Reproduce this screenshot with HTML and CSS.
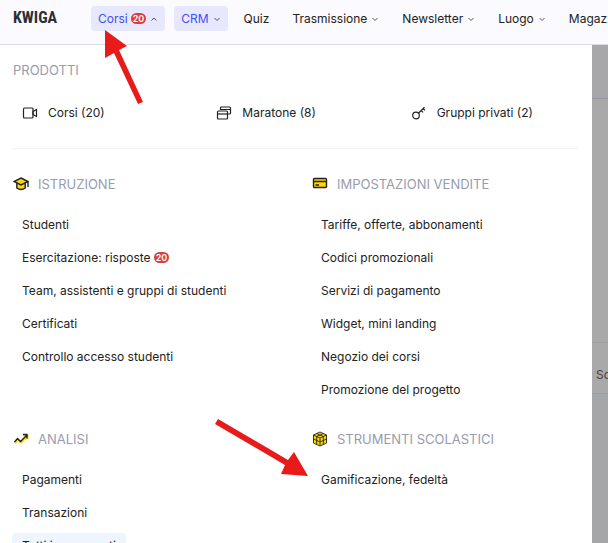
FILE: index.html
```html
<!DOCTYPE html>
<html lang="it">
<head>
  <meta charset="UTF-8" />
  <meta name="viewport" content="width=device-width, initial-scale=1.0" />
  <title>KWIGA - Corsi</title>
  <link rel="stylesheet" href="styles.css">
</head>
<body>
  <header class="topbar">
    <a class="logo" href="#">KWIGA</a>
    <nav class="nav">
      <button class="nav-item active" type="button" aria-expanded="true">Corsi <span class="badge">20</span>
        <svg class="chevron" viewBox="0 0 8 8"><path d="M1.5 5.5 4 3l2.5 2.5"/></svg></button>
      <button class="nav-item active" type="button">CRM
        <svg class="chevron" viewBox="0 0 8 8"><path d="M1.5 3 4 5.5 6.5 3"/></svg></button>
      <a class="nav-item" href="#">Quiz</a>
      <button class="nav-item" type="button">Trasmissione
        <svg class="chevron" viewBox="0 0 8 8"><path d="M1.5 3 4 5.5 6.5 3"/></svg></button>
      <button class="nav-item" type="button">Newsletter
        <svg class="chevron" viewBox="0 0 8 8"><path d="M1.5 3 4 5.5 6.5 3"/></svg></button>
      <button class="nav-item" type="button">Luogo
        <svg class="chevron" viewBox="0 0 8 8"><path d="M1.5 3 4 5.5 6.5 3"/></svg></button>
      <a class="nav-item" href="#">Magazzino</a>
    </nav>
  </header>

  <div class="page">
    <main class="menu">
      <section class="products">
        <h2>PRODOTTI</h2>
        <div class="product-list">
          <a href="#">
            <svg class="icon line" viewBox="0 0 16 16"><rect x="1.500" y="3" width="9.500" height="10" rx="1"/><path d="M11 6.500 14.500 4.500v7L11 9.500z"/></svg>
            Corsi (20)</a>
          <a href="#">
            <svg class="icon line" viewBox="0 0 16 16"><path d="M4.500 5V3q0-1 1-1h8q1 0 1 1v5q0 1-1 1H12M4.500 4.500h10"/><rect x="1.500" y="6" width="10" height="8" rx="1"/><path d="M1.500 9h10"/></svg>
            Maratone (8)</a>
          <a href="#">
            <svg class="icon line" viewBox="0 0 16 16"><circle cx="5" cy="10.500" r="3.300"/><path d="M7.400 8.200 13.500 2.200M10 5.600l2.200 1.800M12 3.700l2 1.600"/></svg>
            Gruppi privati (2)</a>
        </div>
      </section>

      <div class="groups">
        <section class="group">
          <h2>
            <svg class="icon duo" viewBox="0 0 16 16"><path class="fill" d="M4 7v5q4 3.500 8.500 0V7L8 9z"/><path class="fill" d="M8 2 15 5.500 8 9 1 5.500z"/><path d="M8 2 15 5.500 8 9 1 5.500zM3.800 7.500V12q4.200 3 8.400 0V7.500M15 5.500V11"/></svg>
            ISTRUZIONE</h2>
          <ul>
            <li><a href="#">Studenti</a></li>
            <li><a href="#">Esercitazione: risposte <span class="badge">20</span></a></li>
            <li><a href="#">Team, assistenti e gruppi di studenti</a></li>
            <li><a href="#">Certificati</a></li>
            <li><a href="#">Controllo accesso studenti</a></li>
          </ul>
        </section>
        <section class="group">
          <h2>
            <svg class="icon duo" viewBox="0 0 16 16"><rect class="fill" x="1.500" y="2.500" width="13" height="9" rx="1"/><rect x="1.500" y="2.500" width="13" height="9" rx="1"/><path d="M1.500 5.500h13M3.500 9H7"/></svg>
            IMPOSTAZIONI VENDITE</h2>
          <ul>
            <li><a href="#">Tariffe, offerte, abbonamenti</a></li>
            <li><a href="#">Codici promozionali</a></li>
            <li><a href="#">Servizi di pagamento</a></li>
            <li><a href="#">Widget, mini landing</a></li>
            <li><a href="#">Negozio dei corsi</a></li>
            <li><a href="#">Promozione del progetto</a></li>
          </ul>
        </section>
        <section class="group">
          <h2>
            <svg class="icon duo" viewBox="0 0 16 16"><path class="glow" d="m2 12 3-3.500 3 3 6.500-6M10.500 4.500h4v4"/><path d="m1.500 11 3-3.500 3 3L14 4M10 3.500h4v4"/></svg>
            ANALISI</h2>
          <ul>
            <li><a href="#">Pagamenti</a></li>
            <li><a href="#">Transazioni</a></li>
            <li><a class="hover" href="#">Tutti i pagamenti</a></li>
          </ul>
        </section>
        <section class="group">
          <h2>
            <svg class="icon duo cube" viewBox="0 0 16 16"><path class="fill" d="m8 1 6.500 3v8L8 15l-6.500-3V4z"/><path d="m8 1 6.500 3v8L8 15l-6.500-3V4zM1.500 4 8 7l6.500-3M8 7v8M4.700 5.500v8M11.300 5.500v8M1.500 8 8 11l6.500-3M4.700 2.500l6.600 3M11.300 2.500l-6.600 3"/></svg>
            STRUMENTI SCOLASTICI</h2>
          <ul>
            <li><a href="#">Gamificazione, fedeltà</a></li>
          </ul>
        </section>
      </div>
    </main>

    <!-- dimmed page behind the menu -->
    <aside class="behind">
      <div class="behind-top"></div>
      <div class="behind-body"></div>
      <div class="behind-row">Scuola</div>
      <div class="behind-rest"></div>
    </aside>
  </div>

  <svg class="arrow arrow-top" viewBox="0 0 40 78"><path d="M1 1 23 17 15 21 39 73 34 75 10 24 1 29z"/></svg>
  <svg class="arrow arrow-bottom" viewBox="0 0 94 60"><path d="M3 1 73 42 79 34 93 58 66 56 70 47 0 6z"/></svg>
</body>
</html>
```
FILE: styles.css
```css
* {
  box-sizing: border-box;
}
body {
  margin: 0;
  height: 100vh;
  overflow: hidden;
  display: flex;
  flex-direction: column;
  font-family: Inter, sans-serif;
  font-size: 12px;
  color: #222;
  background: #fff;
}
a {
  color: inherit;
  text-decoration: none;
}
.topbar {
  flex: none;
  display: flex;
  align-items: flex-start;
  height: 45px;
  padding: 6px 0 0 13px;
  overflow: hidden;
  background: #fafaff;
  border-bottom: 1px solid #dcdce8;
}
.logo {
  flex: none;
  width: 78px;
  font: bold 16px/24px "Liberation Sans Narrow", "Roboto Condensed", "Open Sans Condensed", sans-serif;
  color: #2b2f33;
}
.nav {
  flex: 1;
  min-width: 0;
  display: flex;
  gap: 9px;
}
.nav-item {
  flex: none;
  display: flex;
  align-items: center;
  height: 25px;
  padding: 0 7px;
  border: 0;
  border-radius: 4px;
  background: none;
  font: inherit;
  color: #222;
}
.nav-item.active {
  background: #e7e8fd;
  color: #3d50f5;
}
.chevron {
  width: 8px;
  height: 8px;
  margin-left: 4px;
  fill: none;
  stroke: #555;
}
.badge {
  display: inline-block;
  height: 11px;
  padding: 0 2px;
  margin-left: 3px;
  border-radius: 6px;
  background: #dc3c3c;
  color: #fff;
  font-size: 9px;
  font-weight: 600;
  line-height: 11px;
}
.page {
  flex: 1;
  min-height: 0;
  display: flex;
}
.menu {
  flex: 1;
  padding: 15px 14px 0 12px;
  overflow: hidden;
  background: #fff;
}
h2 {
  display: flex;
  align-items: center;
  gap: 9px;
  margin: 0;
  padding-left: 1px;
  font-size: 13px;
  font-weight: 400;
  line-height: 20px;
  color: #979cae;
}
.products {
  padding-bottom: 25px;
  border-bottom: 1px solid #f1f1f1;
}
.product-list {
  display: grid;
  grid-template-columns: repeat(3, 1fr);
  gap: 17px;
  margin-top: 23px;
}
.product-list a {
  display: flex;
  align-items: center;
  gap: 10px;
  padding-left: 10px;
  line-height: 20px;
}
.icon {
  flex: none;
  width: 16px;
  height: 16px;
  fill: none;
  stroke: #222;
}
.icon.line {
  stroke-width: 1.2;
}
.icon.duo {
  stroke-width: 1.4;
}
.icon.cube {
  stroke-width: 0.9;
}
.icon .fill {
  fill: #ffd60a;
  stroke: none;
}
.icon .glow {
  stroke: #ffd60a;
  stroke-width: 2;
}
.groups {
  display: grid;
  grid-template-columns: 1fr 1fr;
  column-gap: 32px;
  row-gap: 23px;
  padding-top: 25px;
}
ul {
  list-style: none;
  margin: 14px 0 0;
  padding: 0;
}
li {
  height: 33px;
  padding-top: 4px;
}
li a {
  display: inline-flex;
  align-items: center;
  height: 25px;
  padding: 0 10px;
  border-radius: 4px;
}
li a.hover {
  background: #eff5ff;
}
.behind {
  flex: none;
  width: 16px;
  display: flex;
  flex-direction: column;
  overflow: hidden;
  background: #a9a9a9;
}
.behind-top {
  height: 54px;
  background: #a7a7aa;
  border-bottom: 1px solid #9797a5;
}
.behind-body {
  height: 243px;
}
.behind-row {
  height: 52px;
  padding-left: 4px;
  border-top: 1px solid #a0a0a0;
  border-bottom: 1px solid #9c9c9c;
  line-height: 64px;
  color: #444;
}
.behind-rest {
  flex: 1;
  background: #a5a6a8;
}
/* pointers drawn over the page */
.arrow {
  position: absolute;
  fill: #e81b1b;
}
.arrow-top {
  left: 104px;
  top: 29px;
  width: 40px;
  height: 78px;
}
.arrow-bottom {
  left: 215px;
  top: 418px;
  width: 94px;
  height: 60px;
}
```
